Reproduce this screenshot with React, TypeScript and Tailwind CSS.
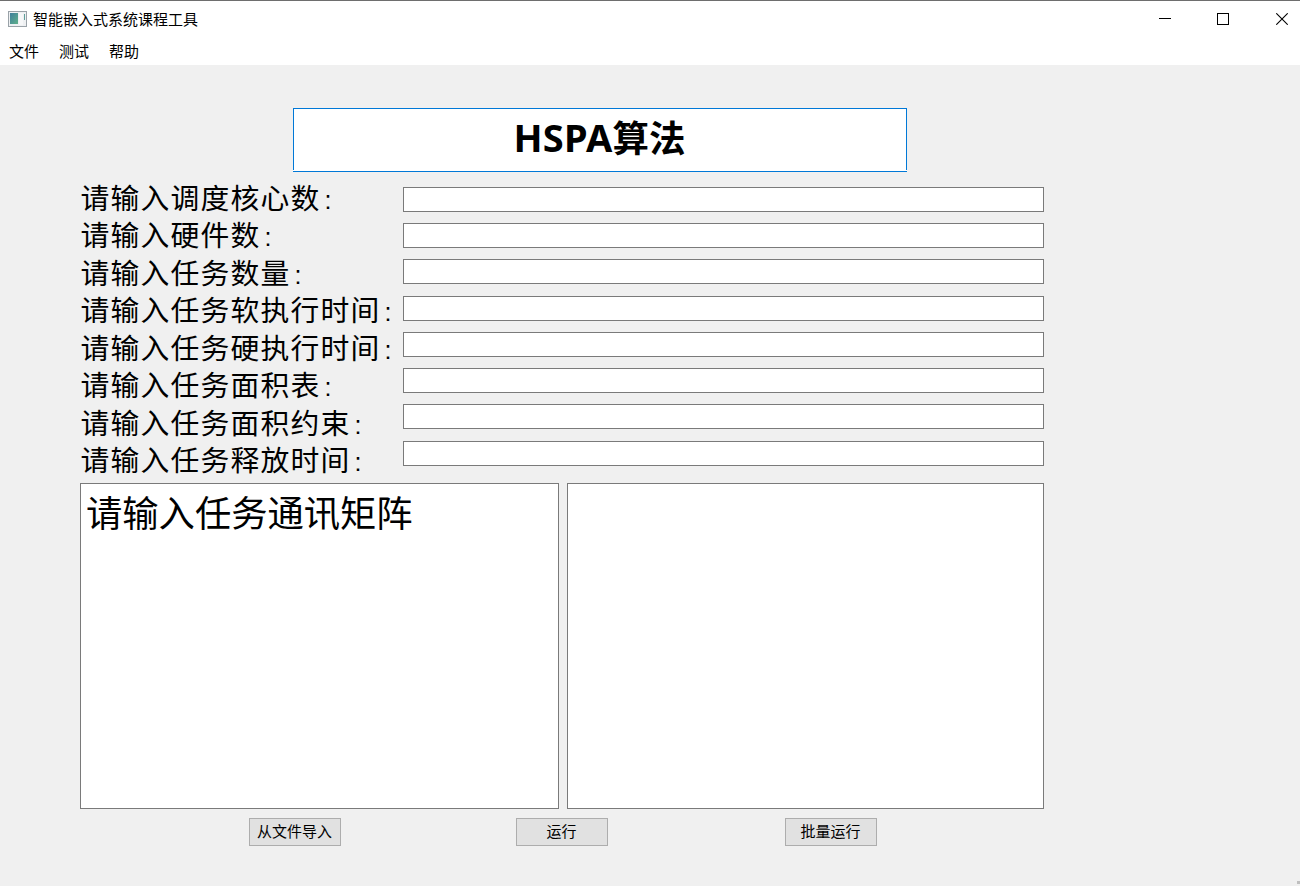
const fields = [
  { label: '请输入调度核心数', gap: 'h-[36px]' },
  { label: '请输入硬件数', gap: 'h-[36px]' },
  { label: '请输入任务数量', gap: 'h-[37px]' },
  { label: '请输入任务软执行时间', gap: 'h-[36px]' },
  { label: '请输入任务硬执行时间', gap: 'h-[36px]' },
  { label: '请输入任务面积表', gap: 'h-[36px]' },
  { label: '请输入任务面积约束', gap: 'h-[37px]' },
  { label: '请输入任务释放时间', gap: 'h-[25px]' },
];

function AppIcon() {
  return (
    <svg width="19" height="16" viewBox="0 0 19 16" shapeRendering="crispEdges">
      <defs>
        <linearGradient id="pane" x1="0" y1="0" x2="1" y2="1">
          <stop offset="0" stopColor="#3f7f9c" />
          <stop offset="1" stopColor="#5fb08a" />
        </linearGradient>
      </defs>
      <rect x="0.5" y="0.5" width="18" height="15" fill="#eef0f2" stroke="#9aa2a8" />
      <rect x="2" y="2" width="8" height="11" fill="url(#pane)" />
      <rect x="11" y="2" width="4" height="12" fill="#f6f7f8" />
      <rect x="16" y="3" width="1" height="6" fill="#5f9f9a" />
    </svg>
  );
}

function TitleBar() {
  return (
    <header className="flex h-[37px] items-center justify-between border-t border-[#6e6e6e] bg-white pl-2 pr-[12px]">
      <div className="flex items-center gap-[6px]">
        <AppIcon />
        <span className="text-[15px] leading-5">智能嵌入式系统课程工具</span>
      </div>
      <div className="flex items-center gap-[46px]">
        <svg width="12" height="12" shapeRendering="crispEdges">
          <rect x="0" y="5" width="12" height="1" />
        </svg>
        <svg width="12" height="12" shapeRendering="crispEdges">
          <rect x="0.5" y="0.5" width="11" height="11" fill="none" stroke="#000" />
        </svg>
        <svg width="12" height="12" className="ml-px">
          <path d="M0.3 0.3L11.7 11.7M11.7 0.3L0.3 11.7" fill="none" stroke="#000" strokeWidth="1.1" />
        </svg>
      </div>
    </header>
  );
}

function PushButton({ children }: { children: string }) {
  return (
    <button className="h-7 w-[92px] border border-[#adadad] bg-[#e1e1e1] pb-[3px] pr-px text-[15px] leading-[23px]">
      {children}
    </button>
  );
}

export default function App() {
  return (
    <div className="relative flex h-[886px] w-[1300px] flex-col overflow-hidden bg-[#f0f0f0] font-['Noto_Sans_CJK_SC',sans-serif] text-black">
      <TitleBar />
      <nav className="flex h-7 items-center gap-5 bg-white pl-[9px] text-[15px] leading-7">
        <span>文件</span>
        <span>测试</span>
        <span>帮助</span>
      </nav>

      <main className="flex flex-col pl-20 pt-[43px]">
        <div className="ml-[213px] flex h-16 w-[614px] flex-col border-b border-[#0078d7] bg-white">
          <h1 className="flex h-[62px] items-center justify-center border-x border-t border-[#0078d7] pb-[5px] pr-px text-[36.5px] font-bold leading-[56px]">
            <span className="font-['Noto_Sans',sans-serif] text-[38px] tracking-[0.3px]">HSPA</span>算法
          </h1>
        </div>

        <div className="mt-[6px] flex h-[305px]">
          <div className="w-[323px] pt-[0.5px]">
            {fields.map((f) => (
              <div key={f.label} className="h-[37.5px] whitespace-nowrap pl-[0.5px] text-[28.8px] leading-[36px] tracking-[1.2px]">
                {f.label}
                <span className="pl-[4px] font-['Liberation_Sans',sans-serif] text-[25px] leading-none">:</span>
              </div>
            ))}
          </div>
          <div className="flex flex-col pt-[9px]">
            {fields.map((f) => (
              <div key={f.label} className={f.gap}>
                <input aria-label={f.label} className="block h-[25px] w-[641px] border border-[#7a7a7a] bg-white px-1 text-[15px] outline-none" />
              </div>
            ))}
          </div>
        </div>

        <div className="flex gap-2">
          <textarea
            defaultValue="请输入任务通讯矩阵"
            className="h-[326px] w-[479px] resize-none border border-[#7a7a7a] bg-white px-[5px] pt-[2px] text-[36.3px] leading-[50px] outline-none"
          />
          <textarea className="h-[326px] w-[477px] resize-none border border-[#7a7a7a] bg-white outline-none" />
        </div>

        <div className="mt-[9px] flex pl-[169px]">
          <PushButton>从文件导入</PushButton>
          <div className="ml-[175px] mr-[177px] flex">
            <PushButton>运行</PushButton>
          </div>
          <PushButton>批量运行</PushButton>
        </div>
      </main>

      <div className="absolute bottom-[2px] right-0 h-[3px] w-[3px] bg-[#bfbfbf]" />
    </div>
  );
}
